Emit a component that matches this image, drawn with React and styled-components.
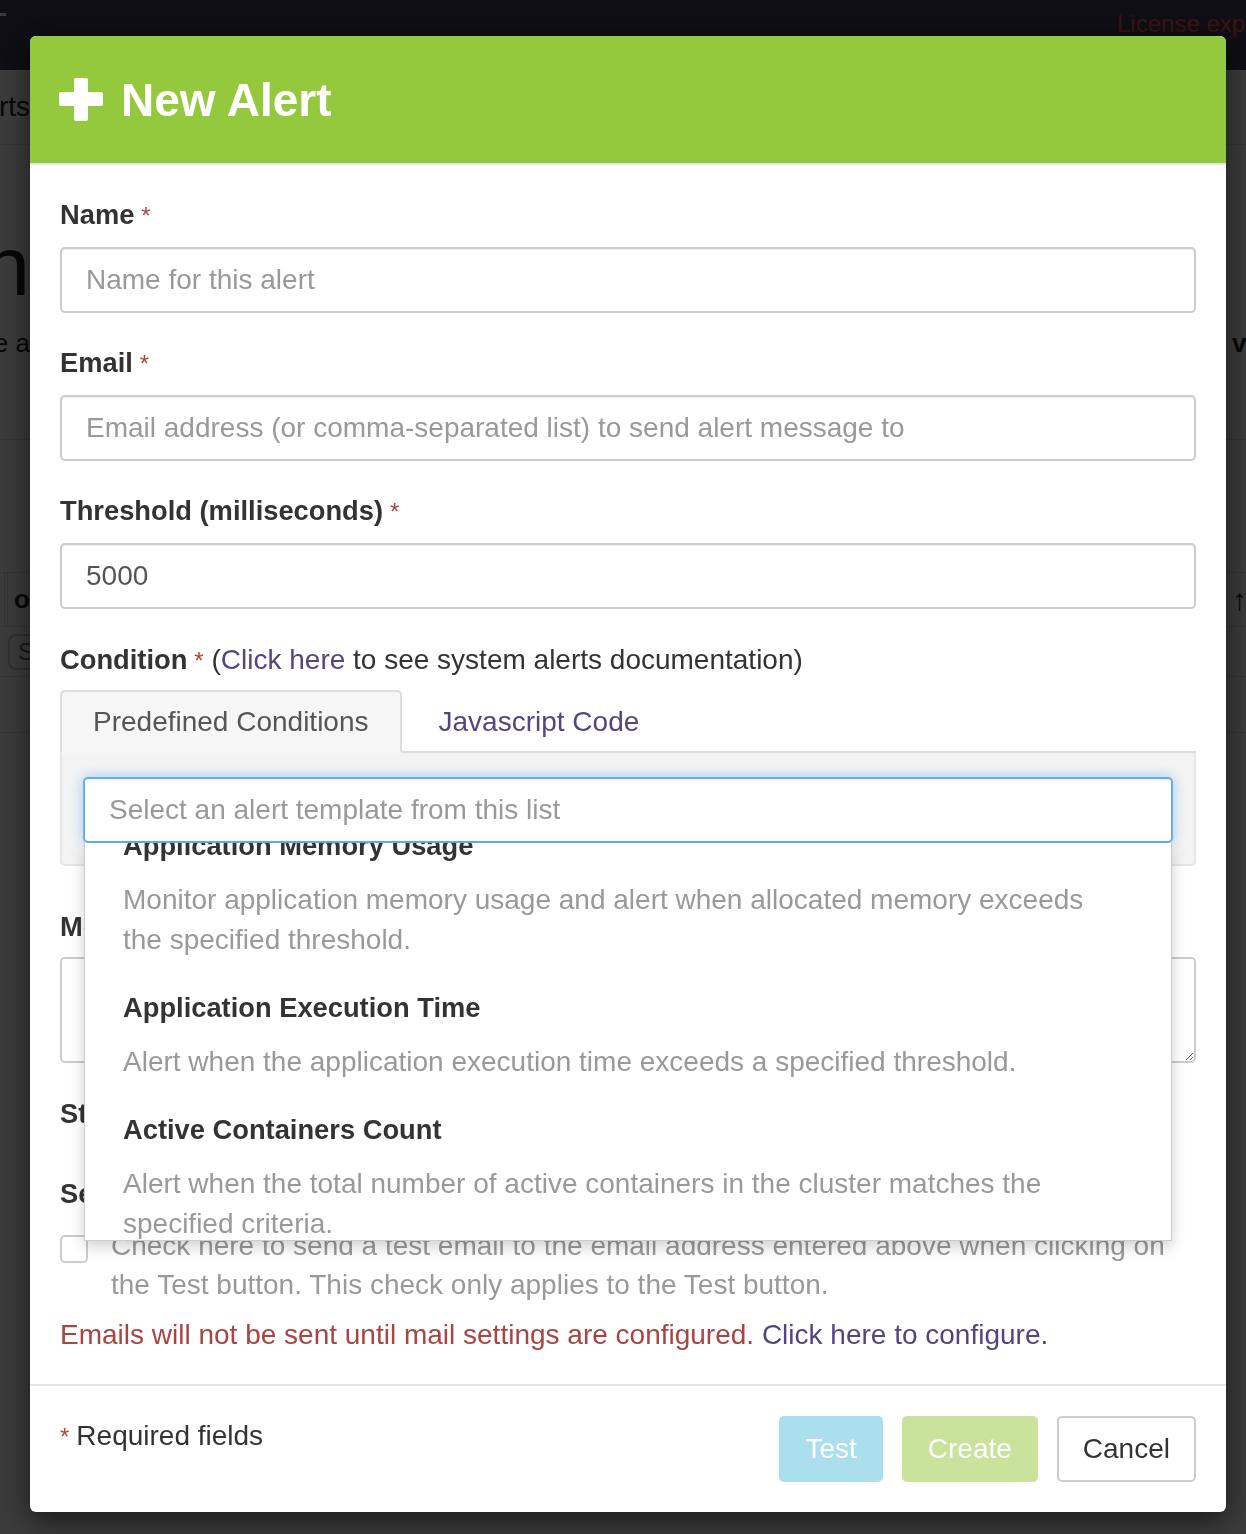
import React from "react";
import styled, { createGlobalStyle } from "styled-components";

const GlobalStyle = createGlobalStyle`
  html, body { margin: 0; padding: 0; height: 100%; overflow: hidden; }
  body {
    font-family: "Liberation Sans", Arial, sans-serif;
    color: #333;
    background: #fff;
  }
  * { box-sizing: border-box; }
`;

/* ---------- page behind the modal ---------- */

const Page = styled.div`
  height: 1534px;
  display: flex;
  flex-direction: column;
  background: #fff;
`;

const Navbar = styled.div`
  height: 70px;
  flex-shrink: 0;
  background: #403c56;
  display: flex;
  justify-content: space-between;
  align-items: flex-start;
`;

const BrandTick = styled.span`
  width: 6px;
  height: 3px;
  margin-top: 13px;
  background: #fff;
`;

const NavRight = styled.div`
  width: 129px;
  overflow: hidden;
  white-space: nowrap;
  padding-top: 8px;
  color: #f2554e;
  font-size: 24px;
  line-height: 32px;
`;

const Row = styled.div`
  display: flex;
  justify-content: space-between;
  align-items: ${p => p.align || "center"};
  height: ${p => p.h}px;
  border-bottom: ${p => (p.line ? "1px solid #e3e3e3" : "none")};
  flex-shrink: 0;
`;

const SliverL = styled.div`
  width: 30px;
  overflow: hidden;
  display: flex;
  justify-content: ${p => (p.start ? "flex-start" : "flex-end")};
  white-space: nowrap;
  font-size: ${p => p.size || 28}px;
  font-weight: ${p => (p.bold ? 700 : 400)};
  color: #222;
`;

const SliverR = styled.div`
  width: 20px;
  overflow: hidden;
  white-space: nowrap;
  padding-left: 6px;
  font-size: ${p => p.size || 28}px;
  font-weight: ${p => (p.bold ? 700 : 400)};
  color: #222;
`;

const SmallBtn = styled.span`
  margin-left: 8px;
  border: 2px solid #ccc;
  border-radius: 8px;
  padding: 2px 8px;
  font-size: 24px;
  color: #666;
`;

const CellBar = styled.span`
  display: flex;
  height: 54px;
  align-items: center;
  border-left: 4px double #ddd;
  margin-left: 4px;
  padding-left: 6px;
`;

/* ---------- modal ---------- */

const Overlay = styled.div`
  position: fixed;
  inset: 0;
  background: rgba(0, 0, 0, 0.77);
  display: flex;
  align-items: flex-start;
`;

const Modal = styled.div`
  width: 1196px;
  margin: 36px 0 0 30px;
  background: #fff;
  border-radius: 6px;
  box-shadow: 0 8px 30px rgba(0, 0, 0, 0.6);
`;

const Header = styled.div`
  height: 129px;
  background: #95c93d;
  border-bottom: 2px solid #e5e5e5;
  border-radius: 6px 6px 0 0;
  padding: 0 29px;
  display: flex;
  align-items: center;
  gap: 18px;
`;

const Title = styled.h2`
  margin: 0;
  color: #fff;
  font-size: 46px;
  font-weight: 700;
  line-height: 50px;
`;

const Body = styled.div`
  padding: 30px 30px 30px;
`;

const Group = styled.div`
  margin-bottom: ${p => (p.mb != null ? p.mb : 30)}px;
`;

const Label = styled.label`
  display: block;
  font-size: 27.3px;
  font-weight: 700;
  line-height: 39px;
  margin-bottom: ${p => (p.mb != null ? p.mb : 12)}px;
  color: #333;
`;

const Req = styled.span`
  color: #a94442;
  font-weight: 400;
  font-size: 24px;
  margin-left: 7px;
`;

const Plain = styled.span`
  font-weight: 400;
  font-size: 28px;
`;

const Link = styled.a`
  color: #55457f;
  text-decoration: none;
`;

const Input = styled.input`
  display: block;
  width: 100%;
  height: 66px;
  padding: 0 24px;
  font-family: inherit;
  font-size: 28px;
  color: #555;
  background: #fff;
  border: 2px solid ${p => (p.focused ? "#66afe9" : "#ccc")};
  border-radius: 5px;
  box-shadow: ${p =>
    p.focused
      ? "inset 0 1px 1px rgba(0,0,0,.075), 0 0 14px rgba(102,175,233,.6)"
      : "inset 0 1px 1px rgba(0,0,0,.075)"};
  outline: none;
  &::placeholder { color: #999; }
`;

const TextArea = styled.textarea`
  display: block;
  width: 100%;
  height: 106px;
  padding: 12px 24px;
  font-family: inherit;
  font-size: 28px;
  border: 2px solid #ccc;
  border-radius: 5px;
  resize: vertical;
  outline: none;
`;

const Tabs = styled.div`
  display: flex;
  border-bottom: 2px solid #ddd;
`;

const Tab = styled.div`
  height: 63px;
  margin-bottom: -2px;
  margin-right: 4px;
  padding: 0 31px;
  display: flex;
  align-items: center;
  font-size: 28px;
  color: ${p => (p.active ? "#555" : "#55457f")};
  background: ${p => (p.active ? "#f6f6f6" : "transparent")};
  border: 2px solid ${p => (p.active ? "#ddd" : "transparent")};
  border-bottom-color: ${p => (p.active ? "#f6f6f6" : "transparent")};
  border-radius: 5px 5px 0 0;
`;

const Well = styled.div`
  background: #f3f3f3;
  border: 2px solid #e6e6e6;
  border-top: none;
  border-radius: 0 0 5px 5px;
  padding: 24px 21px 21px;
`;

const SelectWrap = styled.div`
  position: relative;
`;

const Dropdown = styled.div`
  position: absolute;
  top: 100%;
  left: 1px;
  right: 1px;
  height: 398px;
  overflow: hidden;
  background: #fff;
  border: 1px solid #ccc;
  border-top: none;
  box-shadow: 0 6px 14px rgba(0, 0, 0, 0.18);
  z-index: 10;
`;

const List = styled.div`
  margin-top: -31px;
`;

const Item = styled.div`
  padding: 14px 64px 14px 38px;
`;

const ItemTitle = styled.div`
  font-size: 27.3px;
  font-weight: 700;
  line-height: 40px;
  color: #333;
`;

const ItemDesc = styled.div`
  margin-top: 14px;
  font-size: 28px;
  line-height: 40px;
  color: #999;
`;

const InlineLabel = styled(Label)`
  display: flex;
  gap: 20px;
`;

const CheckRow = styled.div`
  display: flex;
  align-items: flex-start;
  gap: 23px;
`;

const Check = styled.input`
  appearance: none;
  flex-shrink: 0;
  width: 28px;
  height: 28px;
  margin: 9px 0 0;
  background: #fff;
  border: 2px solid #ccc;
  border-radius: 5px;
`;

const Help = styled.div`
  font-size: 28px;
  line-height: 39px;
  color: #999;
`;

const Danger = styled.div`
  margin-top: 11px;
  font-size: 28px;
  line-height: 39px;
  color: #a94442;
`;

const Footer = styled.div`
  border-top: 2px solid #e5e5e5;
  padding: 30px;
  display: flex;
  justify-content: space-between;
  align-items: flex-start;
`;

const Note = styled.div`
  font-size: 28px;
  line-height: 40px;
  color: #333;
`;

const NoteStar = styled.span`
  color: #a94442;
  font-size: 24px;
  margin-right: 7px;
`;

const Buttons = styled.div`
  display: flex;
  gap: 19px;
`;

const Button = styled.button`
  height: 66px;
  padding: 0 24px;
  font-family: inherit;
  font-size: 28px;
  border-radius: 5px;
  border: 2px solid ${p => p.border || "transparent"};
  background: ${p => p.bg};
  color: ${p => p.fg || "#fff"};
`;

const PlusIcon = () => (
  <svg width="44" height="43" viewBox="0 0 44 43">
    <rect x="15" y="0" width="14" height="43" rx="2" fill="#fff" />
    <rect x="0" y="14" width="44" height="14" rx="2" fill="#fff" />
  </svg>
);

const templates = [
  {
    title: "Application Memory Usage",
    desc: "Monitor application memory usage and alert when allocated memory exceeds the specified threshold.",
  },
  {
    title: "Application Execution Time",
    desc: "Alert when the application execution time exceeds a specified threshold.",
  },
  {
    title: "Active Containers Count",
    desc: "Alert when the total number of active containers in the cluster matches the specified criteria.",
  },
];

const Background = () => (
  <Page>
    <Navbar>
      <BrandTick />
      <NavRight>License expired</NavRight>
    </Navbar>
    <Row h={75} line>
      <SliverL>Alerts</SliverL>
      <SliverR />
    </Row>
    <Row h={170} align="flex-end">
      <SliverL size={84}>Admin</SliverL>
      <SliverR />
    </Row>
    <Row h={56}>
      <SliverL size={26}>are a</SliverL>
      <SliverR size={26} bold>view</SliverR>
    </Row>
    <Row h={69} line>
      <SliverL />
      <SliverR />
    </Row>
    <Row h={133} line />
    <Row h={54} line>
      <SliverL size={26} bold start>
        <CellBar>options</CellBar>
      </SliverL>
      <SliverR size={30}>↑</SliverR>
    </Row>
    <Row h={50} line>
      <SliverL start>
        <SmallBtn>Start</SmallBtn>
      </SliverL>
      <SliverR />
    </Row>
    <Row h={56} line>
      <SliverL />
      <SliverR />
    </Row>
  </Page>
);

const App = () => {
  return (
    <>
      <GlobalStyle />
      <Background />
      <Overlay>
        <Modal>
          <Header>
            <PlusIcon />
            <Title>New Alert</Title>
          </Header>
          <Body>
            <Group>
              <Label>
                Name<Req>*</Req>
              </Label>
              <Input placeholder="Name for this alert" />
            </Group>
            <Group>
              <Label>
                Email<Req>*</Req>
              </Label>
              <Input placeholder="Email address (or comma-separated list) to send alert message to" />
            </Group>
            <Group mb={31}>
              <Label>
                Threshold (milliseconds)<Req>*</Req>
              </Label>
              <Input defaultValue="5000" />
            </Group>
            <Group mb={41}>
              <Label mb={10}>
                Condition<Req>*</Req>
                <Plain>
                  {" "}(<Link href="#">Click here</Link> to see system alerts documentation)
                </Plain>
              </Label>
              <Tabs>
                <Tab active>Predefined Conditions</Tab>
                <Tab>Javascript Code</Tab>
              </Tabs>
              <Well>
                <SelectWrap>
                  <Input focused placeholder="Select an alert template from this list" />
                  <Dropdown>
                    <List>
                      {templates.map(t => (
                        <Item key={t.title}>
                          <ItemTitle>{t.title}</ItemTitle>
                          <ItemDesc>{t.desc}</ItemDesc>
                        </Item>
                      ))}
                    </List>
                  </Dropdown>
                </SelectWrap>
              </Well>
            </Group>
            <Group mb={31}>
              <Label mb={11}>Message</Label>
              <TextArea />
            </Group>
            <Group mb={41}>
              <InlineLabel mb={0}>
                Status
                <Plain>Enabled</Plain>
              </InlineLabel>
            </Group>
            <Group mb={0}>
              <Label mb={13}>Send test email</Label>
              <CheckRow>
                <Check type="checkbox" />
                <Help>
                  Check here to send a test email to the email address entered above when clicking on the Test
                  button. This check only applies to the Test button.
                </Help>
              </CheckRow>
              <Danger>
                Emails will not be sent until mail settings are configured.{" "}
                <Link href="#">Click here to configure.</Link>
              </Danger>
            </Group>
          </Body>
          <Footer>
            <Note>
              <NoteStar>*</NoteStar>Required fields
            </Note>
            <Buttons>
              <Button bg="#acdfee">Test</Button>
              <Button bg="#cae39c">Create</Button>
              <Button bg="#fff" fg="#333" border="#ccc">
                Cancel
              </Button>
            </Buttons>
          </Footer>
        </Modal>
      </Overlay>
    </>
  );
};

export default App;
